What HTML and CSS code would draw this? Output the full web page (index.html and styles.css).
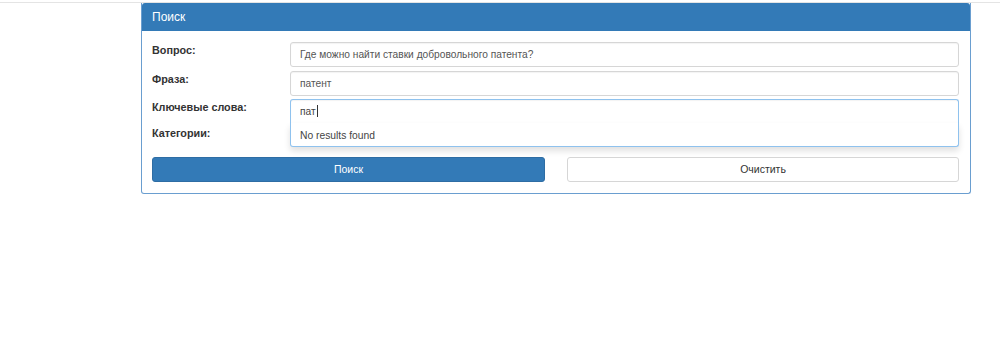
FILE: index.html
```html
<!DOCTYPE html>
<html lang="ru">
<head>
    <meta charset="UTF-8">
    <meta name="viewport" content="width=device-width, initial-scale=1.0">
    <title>Поиск</title>
    <link rel="stylesheet" href="styles.css">
</head>
<body>
    <div class="topline"></div>

    <div class="panel">
        <div class="panel-heading">Поиск</div>
        <div class="panel-body">
            <div class="form-row">
                <label class="form-label">Вопрос:</label>
                <div class="form-field">
                    <div class="input">Где можно найти ставки добровольного патента?</div>
                </div>
            </div>
            <div class="form-row">
                <label class="form-label">Фраза:</label>
                <div class="form-field">
                    <div class="input">патент</div>
                </div>
            </div>
            <div class="form-row">
                <label class="form-label">Ключевые слова:</label>
                <div class="form-field">
                    <div class="input input-focus">пат<span class="caret"></span></div>
                    <div class="dropdown">No results found</div>
                </div>
            </div>
            <div class="form-row form-row-last">
                <label class="form-label">Категории:</label>
                <div class="form-field"></div>
            </div>

            <div class="buttons">
                <button class="btn btn-primary">Поиск</button>
                <button class="btn btn-default">Очистить</button>
            </div>
        </div>
    </div>
</body>
</html>
```

FILE: styles.css
```css
body, html {
    margin: 0;
    padding: 0;
    background: #ffffff;
    font-family: 'Liberation Sans', Arial, sans-serif;
    color: #333333;
}

.topline {
    height: 2px;
    border-bottom: 1px solid #e4e4e4;
}

.panel {
    width: 830px;
    margin-left: 141px;
    border: 1px solid #6a9ed0;
    border-top: none;
    border-radius: 0 0 3px 3px;
    box-sizing: border-box;
}

.panel-heading {
    background: #337ab7;
    color: #ffffff;
    font-size: 12px;
    height: 28px;
    line-height: 28px;
    padding: 0 10px;
    border-radius: 3px 3px 0 0;
}

.panel-body {
    padding: 11px 11px 11px 10px;
}

.form-row {
    display: grid;
    grid-template-columns: 138px 1fr;
    margin-bottom: 3.5px;
}

.form-row-last {
    margin-top: -3px;
    height: 25px;
}

.form-label {
    font-size: 10.8px;
    font-weight: 700;
    line-height: 16px;
    color: #333333;
}

.form-field {
    position: relative;
}

.input {
    height: 25px;
    line-height: 23px;
    box-sizing: border-box;
    border: 1px solid #d6d6d6;
    border-radius: 3px;
    padding: 0 9px;
    font-size: 10.2px;
    color: #555555;
    box-shadow: inset 0 1px 1px rgba(0, 0, 0, 0.05);
}

.input-focus {
    border-color: #8fc2ee;
    border-bottom-left-radius: 0;
    border-bottom-right-radius: 0;
    border-bottom-color: #f0f0f0;
    color: #444444;
}

.caret {
    display: inline-block;
    width: 1px;
    height: 12px;
    background: #333333;
    vertical-align: -2px;
    margin-left: 1px;
}

.dropdown {
    position: absolute;
    top: 24px;
    left: 0;
    right: 0;
    height: 24px;
    line-height: 21px;
    padding: 2px 9px 0;
    box-sizing: border-box;
    background: #ffffff;
    border: 1px solid #8fc2ee;
    border-top: none;
    border-radius: 0 0 3px 3px;
    font-size: 10.3px;
    color: #444444;
    box-shadow: 0 4px 6px rgba(0, 0, 0, 0.12);
    z-index: 10;
}

.buttons {
    display: grid;
    grid-template-columns: 393px 392px;
    justify-content: space-between;
    margin-top: 7px;
}

.btn {
    height: 25px;
    border-radius: 3px;
    font-family: 'Liberation Sans', Arial, sans-serif;
    font-size: 10.5px;
    cursor: pointer;
    padding: 0;
}

.btn-primary {
    background: #337ab7;
    border: 1px solid #2e6da4;
    color: #ffffff;
}

.btn-default {
    background: #ffffff;
    border: 1px solid #d6d6d6;
    color: #333333;
}
```
